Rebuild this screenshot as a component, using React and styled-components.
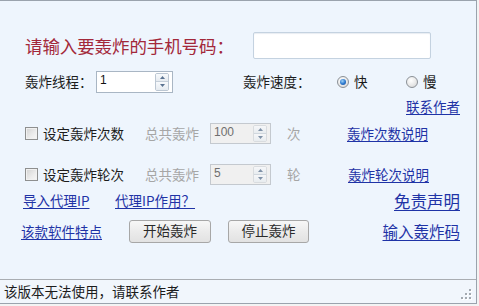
import React from 'react';
import styled, { createGlobalStyle } from 'styled-components';

const Global = createGlobalStyle`
  html, body { margin: 0; padding: 0; background: #f3f3f3; }
  body { font-family: "Noto Sans CJK SC", "Noto Sans", sans-serif; }
  * { box-sizing: border-box; }
`;

const Window = styled.div`
  width: 477px;
  height: 304px;
  background: #eef5fd;
  border-top: 1px solid #9aa3ad;
  border-right: 1px solid #9aa3ad;
  border-bottom: 1px solid #9aa3ad;
  display: flex;
  flex-direction: column;
`;

const Content = styled.div`
  flex: 1;
  display: flex;
  flex-direction: column;
  padding-top: 31px;
`;

const Row = styled.div`
  display: flex;
  align-items: center;
  height: ${p => p.$h}px;
  margin-top: ${p => p.$mt || 0}px;
  padding-left: ${p => p.$pl || 0}px;
  padding-right: 16px;
`;

const Title = styled.div`
  width: ${p => p.$w}px;
  font-size: 17.5px;
  line-height: 1;
  color: #a3283a;
  letter-spacing: -0.1px;
`;

const PhoneInput = styled.div`
  width: 178px;
  height: 27px;
  background: #ffffff;
  border: 1px solid #c4d2e0;
  border-radius: 2px;
  box-shadow: inset 0 1px 1px rgba(160, 180, 200, 0.25);
`;

const Label = styled.span`
  display: inline-block;
  width: ${p => (p.$w ? `${p.$w}px` : 'auto')};
  margin-left: ${p => p.$ml || 0}px;
  font-size: 13.5px;
  line-height: 1;
  white-space: nowrap;
  color: ${p => (p.$muted ? '#a6a6a6' : '#1c1c1c')};
`;

const Spacer = styled.span`
  display: inline-block;
  flex: none;
  width: ${p => p.$w}px;
`;

const LinkText = styled.a`
  display: inline-block;
  width: ${p => (p.$w ? `${p.$w}px` : 'auto')};
  margin-left: ${p => (p.$right ? 'auto' : `${p.$ml || 0}px`)};
  font-size: ${p => p.$size || 13.5}px;
  line-height: 1.15;
  white-space: nowrap;
  color: #1f33a6;
  text-decoration: underline;
  text-underline-offset: 2px;
  cursor: pointer;
`;

const SpinBox = styled.div`
  flex: none;
  width: ${p => p.$w}px;
  height: ${p => p.$h}px;
  display: flex;
  align-items: stretch;
  border: 1px solid ${p => (p.$disabled ? '#c4c9cf' : '#a9b6c4')};
  background: ${p => (p.$disabled ? '#f0f0f0' : '#ffffff')};
`;

const SpinValue = styled.span`
  flex: 1;
  padding: 2px 0 0 3px;
  font-family: "Liberation Sans", "DejaVu Sans", sans-serif;
  font-size: 12px;
  line-height: 13px;
  color: ${p => (p.$disabled ? '#6e6e6e' : '#111111')};
`;

const SpinButtons = styled.div`
  width: 14px;
  margin: 1px 3px 1px 0;
  display: flex;
  flex-direction: column;
  border: 1px solid ${p => (p.$disabled ? '#d2d6da' : '#bcc7d3')};
  border-radius: 2px;
  overflow: hidden;
  opacity: ${p => (p.$disabled ? 0.75 : 1)};
`;

const SpinHalf = styled.div`
  flex: 1;
  display: flex;
  align-items: center;
  justify-content: center;
  background: linear-gradient(#f8fafc, #e6ebf0);
  & + & { border-top: 1px solid #c6cfd9; }
`;

const Arrow = ({ up }) => (
  <svg width="5" height="3" viewBox="0 0 5 3">
    <polygon points={up ? '0,3 5,3 2.5,0' : '0,0 5,0 2.5,3'} fill="#5b7391" />
  </svg>
);

const Spin = ({ w, h, value, disabled }) => (
  <SpinBox $w={w} $h={h} $disabled={disabled}>
    <SpinValue $disabled={disabled}>{value}</SpinValue>
    <SpinButtons $disabled={disabled}>
      <SpinHalf><Arrow up /></SpinHalf>
      <SpinHalf><Arrow /></SpinHalf>
    </SpinButtons>
  </SpinBox>
);

const RadioCircle = styled.span`
  flex: none;
  width: 12px;
  height: 12px;
  border-radius: 50%;
  border: 1px solid #8b9096;
  background: radial-gradient(circle at 40% 35%, #ffffff 0%, #e8e8e8 55%, #cfcfcf 100%);
  display: flex;
  align-items: center;
  justify-content: center;
  &::after {
    content: '';
    display: ${p => (p.$checked ? 'block' : 'none')};
    width: 6px;
    height: 6px;
    border-radius: 50%;
    background: radial-gradient(circle at 40% 35%, #9fd2f7 0%, #2f7bd0 50%, #14468f 100%);
  }
`;

const CheckBox = styled.span`
  flex: none;
  width: 13px;
  height: 13px;
  border: 1px solid #8e8f8f;
  background: linear-gradient(135deg, #d2d2d2 0%, #ececec 60%, #f7f7f7 100%);
  box-shadow: inset 0 0 0 1px #f1f1f1;
`;

const Button = styled.button`
  flex: none;
  width: ${p => p.$w}px;
  height: 23px;
  margin-left: ${p => p.$ml || 0}px;
  padding: 0 0 1px;
  border: 1px solid #a7a7a7;
  border-radius: 3px;
  background: linear-gradient(#f7f7f7, #ebebeb 50%, #e2e2e2);
  font-family: "Noto Sans CJK SC", sans-serif;
  font-size: 13.5px;
  line-height: 1;
  color: #2a2a2a;
`;

const StatusBar = styled.div`
  height: 24px;
  border-top: 1px solid #a9adb2;
  background: #f1f6fc;
  display: flex;
  align-items: center;
  padding: 0 4px 0 4px;
`;

const StatusText = styled.span`
  font-size: 13.5px;
  line-height: 1;
  color: #1c1c1c;
`;

const GripBox = styled.span`
  margin-left: auto;
  align-self: flex-end;
  margin-bottom: 3px;
  display: flex;
`;

const Grip = () => (
  <GripBox>
    <svg width="11" height="11" viewBox="0 0 11 11">
      {[[8, 0], [4, 4], [8, 4], [0, 8], [4, 8], [8, 8]].map(([x, y], i) => (
        <g key={i}>
          <rect x={x + 1} y={y + 1} width="2" height="2" fill="#ffffff" />
          <rect x={x} y={y} width="2" height="2" fill="#a3a9b0" />
        </g>
      ))}
    </svg>
  </GripBox>
);

export default function App() {
  return (
    <>
      <Global />
      <Window>
        <Content>
          <Row $h={27} $pl={25}>
            <Title $w={228}>请输入要轰炸的手机号码：</Title>
            <PhoneInput />
          </Row>

          <Row $h={21} $mt={12} $pl={25}>
            <Label $w={71}>轰炸线程：</Label>
            <Spin w={77} h={22} value="1" />
            <Spacer $w={70} />
            <Label $w={94}>轰炸速度：</Label>
            <RadioCircle $checked />
            <Label $ml={5} $w={52}>快</Label>
            <RadioCircle />
            <Label $ml={5}>慢</Label>
          </Row>

          <Row $h={16} $mt={7}>
            <LinkText $right>联系作者</LinkText>
          </Row>

          <Row $h={21} $mt={8} $pl={25}>
            <CheckBox />
            <Label $ml={5} $w={102}>设定轰炸次数</Label>
            <Label $muted $w={65}>总共轰炸</Label>
            <Spin w={61} h={21} value="100" disabled />
            <Label $muted $ml={16} $w={60}>次</Label>
            <LinkText $size={13.5}>轰炸次数说明</LinkText>
          </Row>

          <Row $h={21} $mt={20} $pl={25}>
            <CheckBox />
            <Label $ml={5} $w={102}>设定轰炸轮次</Label>
            <Label $muted $w={65}>总共轰炸</Label>
            <Spin w={61} h={21} value="5" disabled />
            <Label $muted $ml={16} $w={61}>轮</Label>
            <LinkText $size={13.5}>轰炸轮次说明</LinkText>
          </Row>

          <Row $h={16} $mt={8} $pl={23}>
            <LinkText $w={92}>导入代理IP</LinkText>
            <LinkText>代理IP作用？</LinkText>
            <LinkText $right $size={16.5}>免责声明</LinkText>
          </Row>

          <Row $h={23} $mt={11} $pl={21}>
            <LinkText $w={108}>该款软件特点</LinkText>
            <Button $w={82}>开始轰炸</Button>
            <Button $w={81} $ml={17}>停止轰炸</Button>
            <LinkText $right $size={15.5}>输入轰炸码</LinkText>
          </Row>
        </Content>

        <StatusBar>
          <StatusText>该版本无法使用，请联系作者</StatusText>
          <Grip />
        </StatusBar>
      </Window>
    </>
  );
}
